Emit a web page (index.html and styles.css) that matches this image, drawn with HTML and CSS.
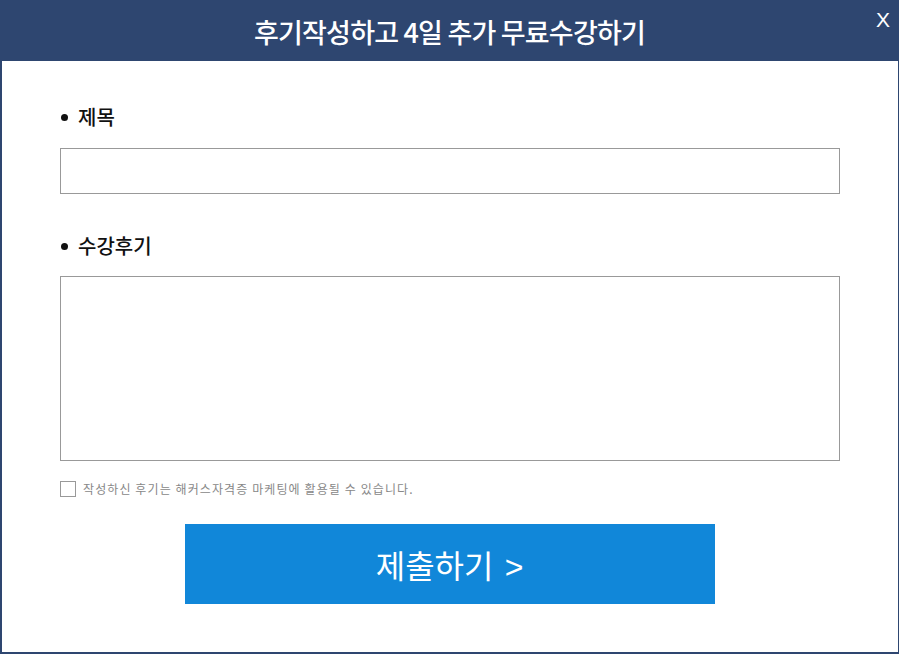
FILE: index.html
```html
<!DOCTYPE html>
<html>

<head>
	<title>후기작성</title>
	<link rel="stylesheet" href="styles.css">
</head>

<body>
	<div class="popup">
		<div class="popup-head">
			<h1>후기작성하고 4일 추가 무료수강하기</h1>
			<span class="close">X</span>
		</div>
		<div class="popup-body">
			<p class="label">제목</p>
			<input type="text" class="field">
			<p class="label second">수강후기</p>
			<textarea class="field area"></textarea>
			<label class="agree">
				<span class="box"></span>
				<span>작성하신 후기는 해커스자격증 마케팅에 활용될 수 있습니다.</span>
			</label>
			<div class="submit-wrap">
				<button class="submit">제출하기 <span class="arrow">&gt;</span></button>
			</div>
		</div>
	</div>
</body>

</html>
```
FILE: styles.css
```css
html, body {
	margin: 0;
	padding: 0;
	background: #ffffff;
}

body {
	font-family: "Noto Sans CJK KR", "Noto Sans", sans-serif;
}

.popup {
	width: 899px;
	height: 654px;
	box-sizing: border-box;
	border: solid #2e4670;
	border-width: 0 1px 2px 2px;
	display: flex;
	flex-direction: column;
}

.popup-head {
	background-color: #2e4670;
	height: 61px;
	margin: 0 -1px 0 -2px;
	display: flex;
	align-items: center;
	justify-content: center;
	position: relative;
}

.popup-head h1 {
	margin: 0;
	color: #ffffff;
	font-size: 27px;
	font-weight: 500;
	letter-spacing: -0.8px;
	line-height: 1;
	padding-top: 2px;
}

.close {
	position: absolute;
	right: 9px;
	top: 9px;
	color: #ffffff;
	font-family: "Liberation Sans", sans-serif;
	font-size: 21px;
	line-height: 1;
}

.popup-body {
	padding: 0 57px 0 58px;
	display: flex;
	flex-direction: column;
}

.label {
	margin: 43px 0 0 0;
	font-size: 20px;
	font-weight: 500;
	color: #111111;
	line-height: 26px;
}

.label::before {
	content: "";
	display: inline-block;
	width: 7px;
	height: 7px;
	border-radius: 50%;
	background: #111111;
	margin: 0 10px 0 1px;
	vertical-align: 4px;
}

.label.second {
	margin-top: 39px;
}

.field {
	display: block;
	box-sizing: border-box;
	width: 780px;
	height: 46px;
	margin-top: 18px;
	border: 1px solid #999999;
	background: #ffffff;
	padding: 0;
	font-family: inherit;
}

.area {
	height: 185px;
	margin-top: 17px;
	resize: none;
}

.agree {
	display: flex;
	align-items: center;
	margin-top: 19px;
	font-size: 12px;
	color: #888888;
	letter-spacing: 1.1px;
}

.box {
	width: 14px;
	height: 14px;
	border: 1px solid #999999;
	margin-right: 7px;
}

.submit-wrap {
	display: flex;
	justify-content: center;
	margin-top: 27px;
}

.submit {
	width: 530px;
	height: 80px;
	margin-right: 2px;
	border: none;
	background-color: #1187d9;
	color: #ffffff;
	font-family: inherit;
	font-size: 32px;
	font-weight: 400;
	padding: 0;
}

.arrow {
	font-family: "Liberation Sans", sans-serif;
	font-weight: 400;
	margin-left: 4px;
}
```
